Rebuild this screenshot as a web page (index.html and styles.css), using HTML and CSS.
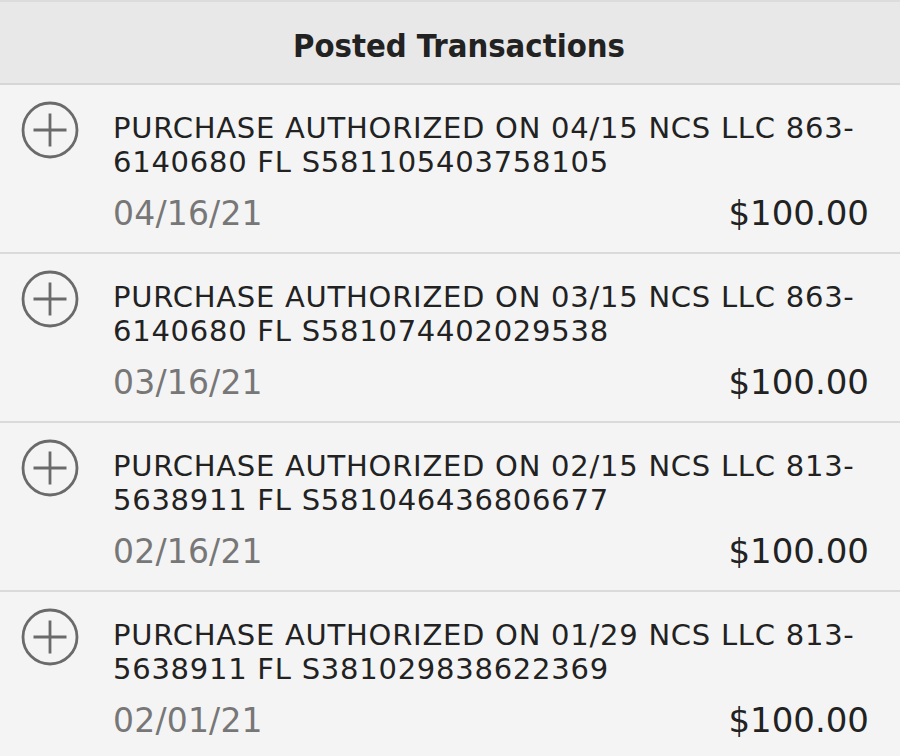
FILE: index.html
```html
<!DOCTYPE html>
<html>
<head>
<meta charset="utf-8">
<link rel="stylesheet" href="styles.css">
</head>
<body>
<div class="page">
  <div class="header">Posted Transactions</div>
  <div class="list">
    <div class="row">
      <svg class="icon" viewBox="0 0 58 58"><circle cx="29" cy="29" r="27" fill="none" stroke="#6a6a6a" stroke-width="2.8"/><path d="M29 12.5v33M12.5 29h33" stroke="#6a6a6a" stroke-width="2.8"/></svg>
      <div class="body">
        <div class="desc">PURCHASE AUTHORIZED ON 04/15 NCS LLC 863-6140680 FL S581105403758105</div>
        <div class="meta"><span class="date">04/16/21</span><span class="amount">$100.00</span></div>
      </div>
    </div>
    <div class="row">
      <svg class="icon" viewBox="0 0 58 58"><circle cx="29" cy="29" r="27" fill="none" stroke="#6a6a6a" stroke-width="2.8"/><path d="M29 12.5v33M12.5 29h33" stroke="#6a6a6a" stroke-width="2.8"/></svg>
      <div class="body">
        <div class="desc">PURCHASE AUTHORIZED ON 03/15 NCS LLC 863-6140680 FL S581074402029538</div>
        <div class="meta"><span class="date">03/16/21</span><span class="amount">$100.00</span></div>
      </div>
    </div>
    <div class="row">
      <svg class="icon" viewBox="0 0 58 58"><circle cx="29" cy="29" r="27" fill="none" stroke="#6a6a6a" stroke-width="2.8"/><path d="M29 12.5v33M12.5 29h33" stroke="#6a6a6a" stroke-width="2.8"/></svg>
      <div class="body">
        <div class="desc">PURCHASE AUTHORIZED ON 02/15 NCS LLC 813-5638911 FL S581046436806677</div>
        <div class="meta"><span class="date">02/16/21</span><span class="amount">$100.00</span></div>
      </div>
    </div>
    <div class="row">
      <svg class="icon" viewBox="0 0 58 58"><circle cx="29" cy="29" r="27" fill="none" stroke="#6a6a6a" stroke-width="2.8"/><path d="M29 12.5v33M12.5 29h33" stroke="#6a6a6a" stroke-width="2.8"/></svg>
      <div class="body">
        <div class="desc">PURCHASE AUTHORIZED ON 01/29 NCS LLC 813-5638911 FL S381029838622369</div>
        <div class="meta"><span class="date">02/01/21</span><span class="amount">$100.00</span></div>
      </div>
    </div>
  </div>
</div>
</body>
</html>
```

FILE: styles.css
```css
html, body {
  margin: 0;
  padding: 0;
  background: #f4f4f4;
}
.page {
  width: 900px;
  height: 756px;
  overflow: hidden;
  font-family: "DejaVu Sans", Verdana, sans-serif;
  color: #222;
  border-top: 2px solid #dcdcdc;
}
.header {
  height: 83px;
  box-sizing: border-box;
  padding-top: 6px;
  padding-left: 18px;
  background: #e8e8e8;
  border-bottom: 2px solid #d6d6d6;
  display: flex;
  align-items: center;
  justify-content: center;
  font-family: "DejaVu Sans Condensed", "DejaVu Sans", sans-serif;
  font-weight: bold;
  font-size: 32.5px;
  color: #222;
}
.row {
  display: flex;
  align-items: flex-start;
  height: 167px;
  border-bottom: 2px solid #dadada;
  padding: 0 31px 0 21px;
}
.icon {
  width: 58px;
  height: 58px;
  flex: none;
  margin-top: 16px;
}
.body {
  flex: 1;
  margin-left: 34px;
  padding-top: 26px;
}
.desc {
  font-size: 29px;
  line-height: 34px;
  letter-spacing: 0.75px;
}
.meta {
  display: flex;
  justify-content: space-between;
  align-items: baseline;
  margin-top: 14px;
}
.date {
  font-size: 33px;
  color: #777;
  letter-spacing: 0.2px;
}
.amount {
  font-size: 34px;
  color: #222;
}
```
